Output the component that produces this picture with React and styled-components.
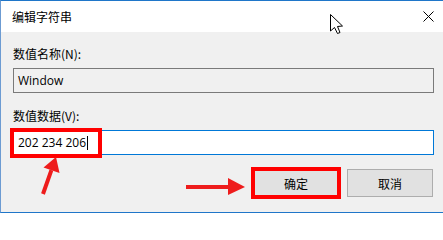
import React from "react";
import styled, { createGlobalStyle } from "styled-components";

const Global = createGlobalStyle`
  html, body { margin: 0; padding: 0; background: #ffffff; }
  body { font-family: "Noto Sans CJK SC", "Noto Sans", sans-serif; }
`;

const font = `"Noto Sans CJK SC", "Noto Sans", sans-serif`;
const latin = `"Open Sans", "Noto Sans CJK SC", sans-serif`;

const Window = styled.div`
  position: relative;
  width: 442px;
  height: 211px;
  border-top: 1px solid #1f76c9;
  border-left: 1px solid #6c9bd2;
  border-bottom: 1px solid #1f76c9;
  display: flex;
  flex-direction: column;
  background: #f0f0f0;
  overflow: hidden;
`;

const TitleBar = styled.div`
  height: 31px;
  background: #ffffff;
  display: flex;
  align-items: center;
  justify-content: space-between;
  padding: 0 9px 0 11px;
  flex-shrink: 0;
`;

const Title = styled.span`
  font-family: ${font};
  font-size: 12px;
  color: #000;
  line-height: 16px;
`;

const CloseIcon = styled.svg`
  width: 11px;
  height: 11px;
  display: block;
`;

const Body = styled.div`
  flex: 1;
  display: flex;
  flex-direction: column;
  padding: 14px 9px 0 12px;
`;

const Label = styled.div`
  font-family: ${font};
  font-size: 12px;
  line-height: 16px;
  color: #000;
  margin-top: ${(p) => p.$mt || 0}px;
`;

const Field = styled.div`
  margin-top: 6px;
  height: 25px;
  box-sizing: border-box;
  border: 1px solid ${(p) => (p.$active ? "#0078d7" : "#7a7a7a")};
  background: ${(p) => (p.$active ? "#ffffff" : "#f0f0f0")};
  display: flex;
  align-items: center;
  padding-left: 4px;
  font-family: ${latin};
  font-size: 12px;
  color: #000;
`;

const Caret = styled.span`
  display: inline-block;
  width: 1px;
  height: 14px;
  background: #000;
  margin-left: 1px;
`;

const Buttons = styled.div`
  margin-top: 14px;
  display: flex;
  justify-content: flex-end;
  gap: 8px;
  padding-right: 1px;
`;

const Button = styled.button`
  width: 86px;
  height: 28px;
  box-sizing: border-box;
  background: #e1e1e1;
  border: 1px solid #adadad;
  font-family: ${font};
  font-size: 12px;
  color: #000;
  padding: 0;
  outline: ${(p) => (p.$marked ? "4px solid #ff0000" : "none")};
  outline-offset: -2px;
`;

const Overlay = styled.svg`
  position: absolute;
  left: -1px;
  top: -1px;
  width: 443px;
  height: 212px;
  pointer-events: none;
`;

export default function App() {
  return (
    <>
      <Global />
      <Window>
        <TitleBar>
          <Title>编辑字符串</Title>
          <CloseIcon viewBox="0 0 11 11">
            <path d="M0.5 0.5 L10.5 10.5 M10.5 0.5 L0.5 10.5" stroke="#000" strokeWidth="1" />
          </CloseIcon>
        </TitleBar>
        <Body>
          <Label>数值名称(N):</Label>
          <Field>Window</Field>
          <Label $mt={15}>数值数据(V):</Label>
          <Field $active>
            202 234 206
            <Caret />
          </Field>
          <Buttons>
            <Button $marked>确定</Button>
            <Button>取消</Button>
          </Buttons>
        </Body>
        <Overlay viewBox="0 0 443 212">
          <rect x="12" y="130" width="88" height="26" fill="none" stroke="#ff0000" strokeWidth="4" />
          <line x1="43" y1="194" x2="51.4" y2="170.2" stroke="#ee1c1c" strokeWidth="4" />
          <polygon points="56,157 59.5,173 43.5,167.5" fill="#ee1c1c" />
          <line x1="186" y1="187" x2="230" y2="187" stroke="#ee1c1c" strokeWidth="4" />
          <polygon points="228,178 245,187 228,195" fill="#ee1c1c" />
          <path
            d="M330.5 14.5 L330.5 31 L334.5 27.5 L337.5 33.5 L340 32.5 L337.5 26.5 L342.5 26 Z"
            fill="#ffffff"
            stroke="#000"
            strokeWidth="1"
            strokeLinejoin="miter"
          />
        </Overlay>
      </Window>
    </>
  );
}
